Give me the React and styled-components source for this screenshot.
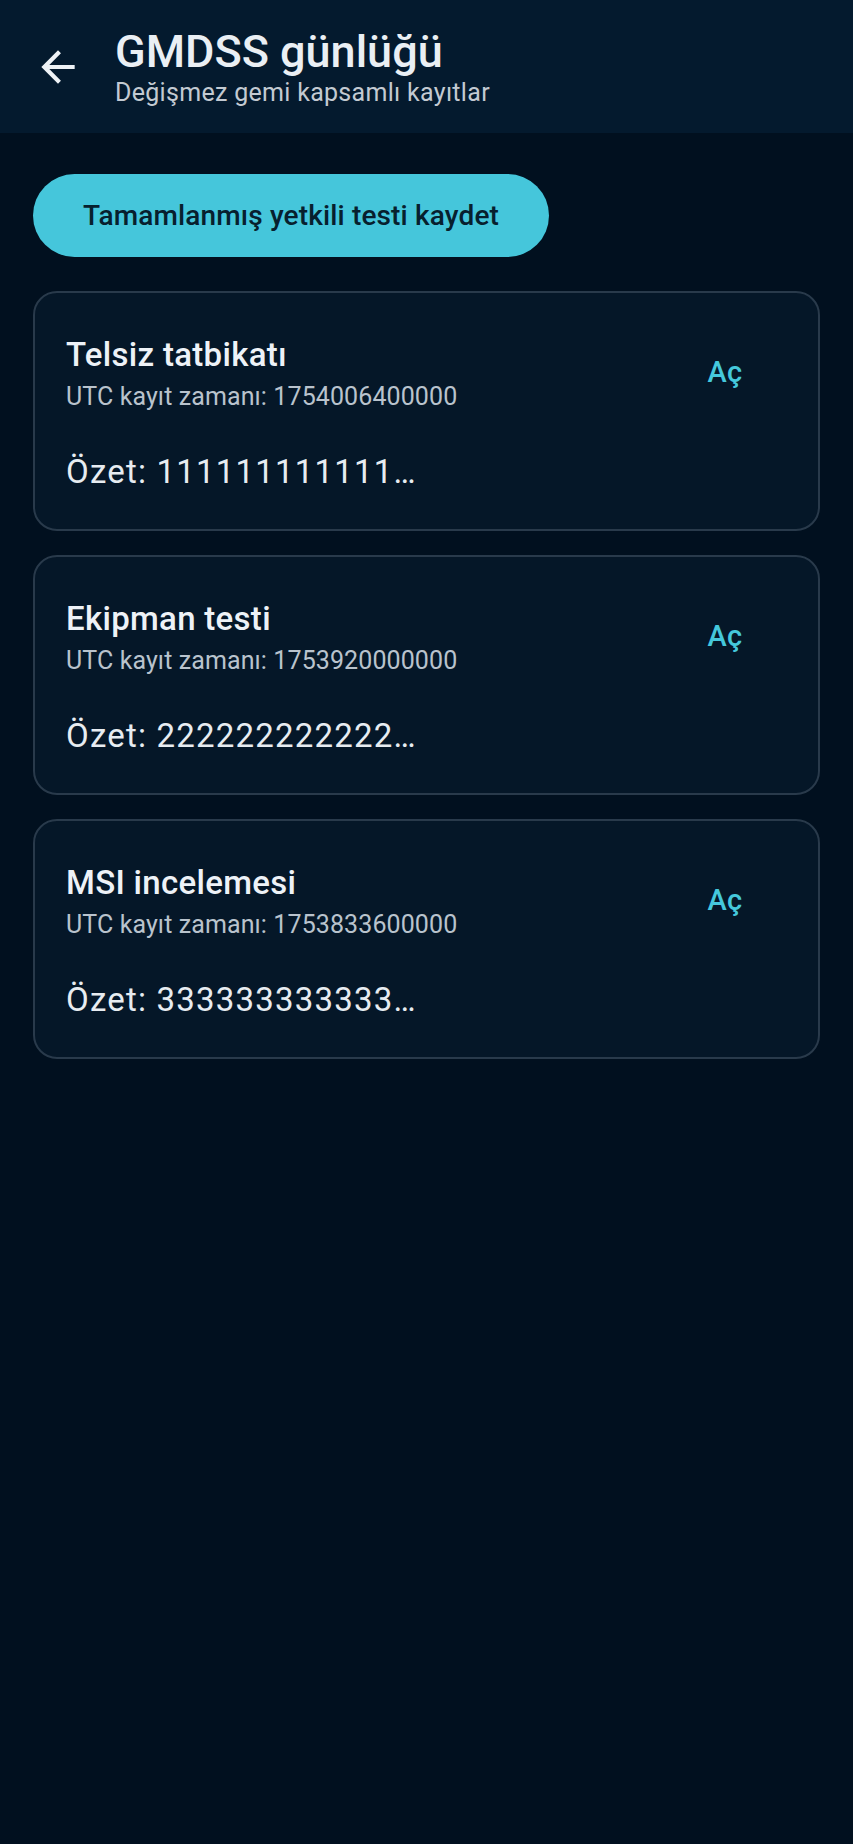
import React from 'react'
import styled, { createGlobalStyle } from 'styled-components'

const GlobalStyle = createGlobalStyle`
  * { box-sizing: border-box; }
  html, body {
    margin: 0;
    padding: 0;
    background: #01101f;
    font-family: Roboto, "Noto Sans", "Liberation Sans", sans-serif;
  }
`

const kayitlar = [
  { id: 1, baslik: 'Telsiz tatbikatı', zaman: '1754006400000', ozet: '111111111111…' },
  { id: 2, baslik: 'Ekipman testi', zaman: '1753920000000', ozet: '222222222222…' },
  { id: 3, baslik: 'MSI incelemesi', zaman: '1753833600000', ozet: '333333333333…' },
]

function App() {
  return (
    <Page>
      <GlobalStyle />
      <TopBar>
        <BackButton aria-label="Geri">
          <svg width="50" height="50" viewBox="0 0 24 24" fill="currentColor">
            <path d="M20 11H7.83l5.59-5.59L12 4l-8 8 8 8 1.41-1.41L7.83 13H20v-2z" />
          </svg>
        </BackButton>
        <TitleBlock>
          <Title>GMDSS günlüğü</Title>
          <Subtitle>Değişmez gemi kapsamlı kayıtlar</Subtitle>
        </TitleBlock>
      </TopBar>

      <Content>
        <PrimaryButton>Tamamlanmış yetkili testi kaydet</PrimaryButton>

        <List>
          {kayitlar.map((k) => (
            <Card key={k.id}>
              <CardRow>
                <CardText>
                  <CardTitle>{k.baslik}</CardTitle>
                  <CardMeta>UTC kayıt zamanı: {k.zaman}</CardMeta>
                </CardText>
                <TextButton>Aç</TextButton>
              </CardRow>
              <Summary>Özet: {k.ozet}</Summary>
            </Card>
          ))}
        </List>
      </Content>
    </Page>
  )
}

const Page = styled.div`
  min-height: 1844px;
  background: #01101f;
`

const TopBar = styled.header`
  height: 133px;
  background: #041a2e;
  display: flex;
  align-items: center;
  padding-left: 8px;
`

const BackButton = styled.button`
  width: 100px;
  height: 100px;
  border: none;
  background: transparent;
  color: #eef2f6;
  display: flex;
  align-items: center;
  justify-content: center;
  padding: 0;
`

const TitleBlock = styled.div`
  display: flex;
  flex-direction: column;
  margin-left: 7px;
  padding-top: 3px;
`

const Title = styled.div`
  font-size: 45px;
  font-weight: 500;
  line-height: 49.5px;
  color: #eaeff4;
`

const Subtitle = styled.div`
  font-size: 25px;
  line-height: 33px;
  letter-spacing: 0.3px;
  color: #c3cad2;
`

const Content = styled.main`
  display: flex;
  flex-direction: column;
  align-items: flex-start;
  padding: 41px 33px;
`

const PrimaryButton = styled.button`
  height: 83px;
  padding: 0 50px;
  border: none;
  border-radius: 999px;
  background: #45c6db;
  color: #07202e;
  font-family: inherit;
  font-size: 28px;
  font-weight: 500;
  letter-spacing: 0.15px;
`

const List = styled.div`
  align-self: stretch;
  display: flex;
  flex-direction: column;
  gap: 24px;
  margin-top: 34px;
`

const Card = styled.div`
  border: 2px solid #293a4b;
  border-radius: 24px;
  background: #051728;
  padding: 37px 31px 32px;
`

const CardRow = styled.div`
  display: flex;
  align-items: center;
  justify-content: space-between;
`

const CardText = styled.div`
  display: flex;
  flex-direction: column;
`

const CardTitle = styled.div`
  font-size: 33px;
  font-weight: 500;
  line-height: 50px;
  letter-spacing: 0.3px;
  color: #eef2f7;
`

const CardMeta = styled.div`
  font-size: 25px;
  line-height: 33px;
  letter-spacing: 0.1px;
  color: #b9c3cd;
`

const TextButton = styled.button`
  min-width: 120px;
  height: 83px;
  margin-right: 2px;
  padding: 0 25px;
  border: none;
  background: transparent;
  color: #45c8dc;
  font-family: inherit;
  font-size: 29px;
  font-weight: 500;
  letter-spacing: 0.2px;
`

const Summary = styled.div`
  margin-top: 34px;
  font-size: 33px;
  line-height: 50px;
  letter-spacing: 1.2px;
  color: #e7ecf1;
`

export default App
